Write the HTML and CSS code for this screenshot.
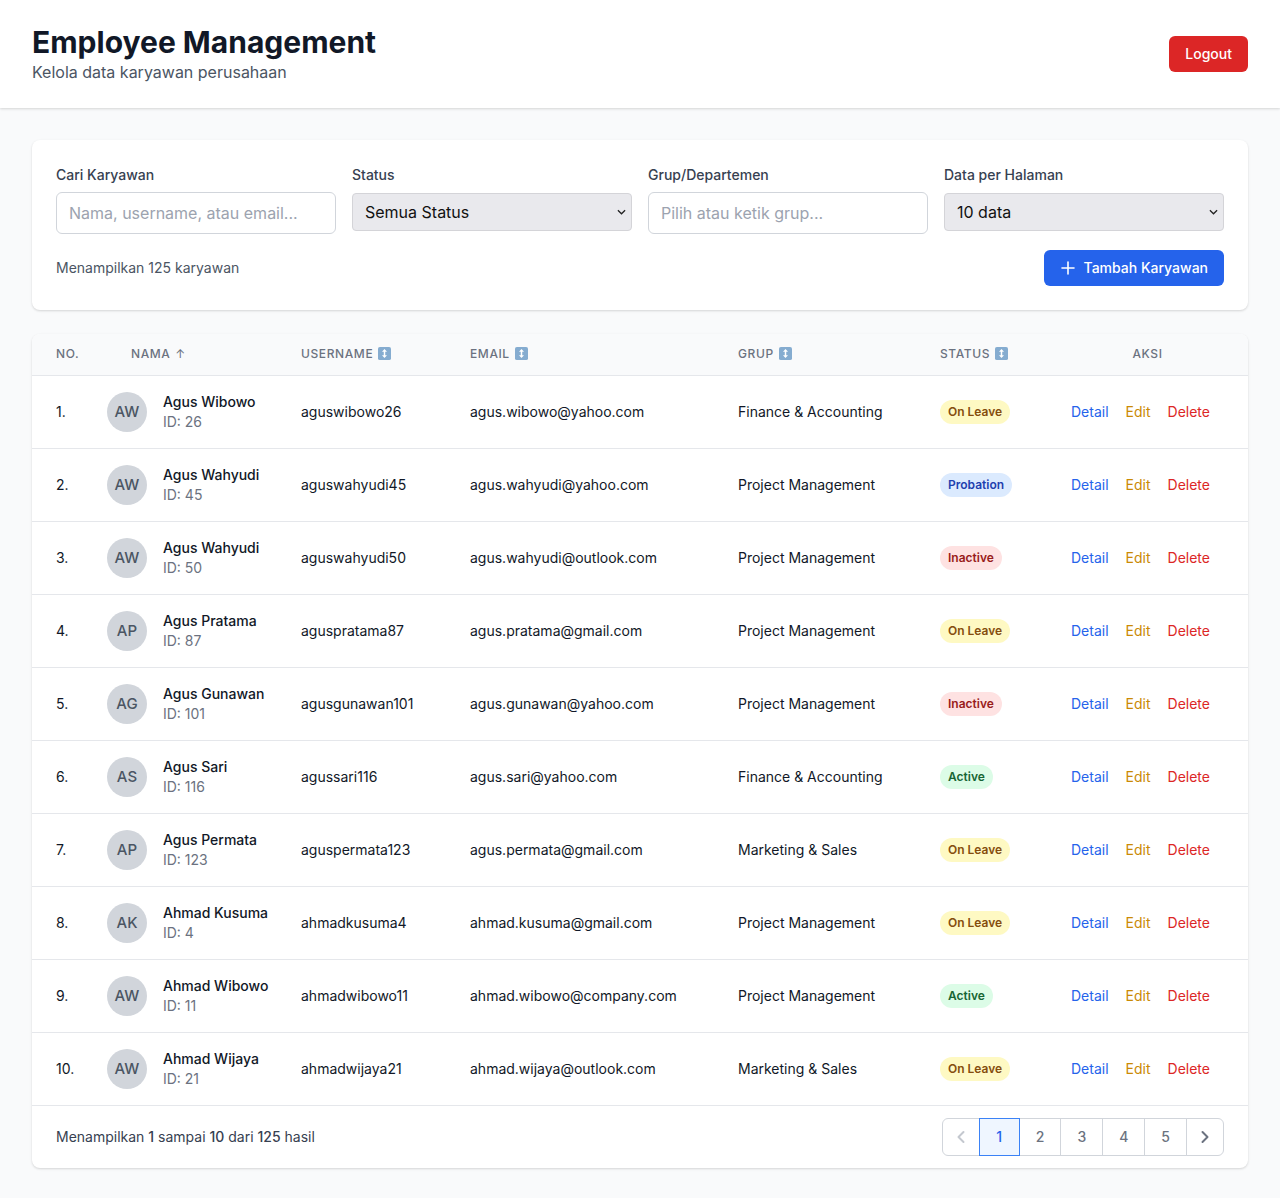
FILE: index.html
```html
<!DOCTYPE html>
<html lang="id">
<head>
<meta charset="utf-8">
<title>Employee Management</title>
<link rel="stylesheet" href="styles.css">
</head>
<body>
<header class="topbar">
  <div class="brand">
    <h1 class="title">Employee Management</h1>
    <p class="subtitle">Kelola data karyawan perusahaan</p>
  </div>
  <button class="btn btn-red">Logout</button>
</header>

<main class="main">
  <section class="card filters">
    <div class="filter-grid">
      <div class="field">
        <label class="label">Cari Karyawan</label>
        <input class="input" type="text" placeholder="Nama, username, atau email...">
      </div>
      <div class="field">
        <label class="label">Status</label>
        <div class="select-wrap">
          <select class="select"><option>Semua Status</option></select>
          <svg class="chev" viewBox="0 0 10 6"><path d="M1 1l4 4 4-4" fill="none" stroke="#222" stroke-width="1.4"/></svg>
        </div>
      </div>
      <div class="field">
        <label class="label">Grup/Departemen</label>
        <input class="input" type="text" placeholder="Pilih atau ketik grup...">
      </div>
      <div class="field">
        <label class="label">Data per Halaman</label>
        <div class="select-wrap">
          <select class="select"><option>10 data</option></select>
          <svg class="chev" viewBox="0 0 10 6"><path d="M1 1l4 4 4-4" fill="none" stroke="#222" stroke-width="1.4"/></svg>
        </div>
      </div>
    </div>
    <div class="filter-foot">
      <span class="muted">Menampilkan 125 karyawan</span>
      <button class="btn btn-blue">
        <svg class="plus" viewBox="0 0 16 16"><path d="M8 2v12M2 8h12" stroke="#fff" stroke-width="1.6" stroke-linecap="round"/></svg>
        Tambah Karyawan
      </button>
    </div>
  </section>

  <section class="card table-card">
    <table class="table">
      <colgroup>
        <col class="c-no"><col class="c-nama"><col class="c-user"><col class="c-email"><col class="c-grup"><col class="c-status"><col class="c-aksi">
      </colgroup>
      <thead>
        <tr>
          <th>No.</th>
          <th class="th-nama">Nama <span class="arrow">↑</span></th>
          <th>Username <svg class="sort" viewBox="0 0 14 14"><rect width="14" height="14" rx="2" fill="#85acd0"/><path d="M7 2.2L4.3 5h1.9v4H4.3L7 11.8 9.7 9H7.8V5h1.9z" fill="#fff"/></svg></th>
          <th>Email <svg class="sort" viewBox="0 0 14 14"><rect width="14" height="14" rx="2" fill="#85acd0"/><path d="M7 2.2L4.3 5h1.9v4H4.3L7 11.8 9.7 9H7.8V5h1.9z" fill="#fff"/></svg></th>
          <th>Grup <svg class="sort" viewBox="0 0 14 14"><rect width="14" height="14" rx="2" fill="#85acd0"/><path d="M7 2.2L4.3 5h1.9v4H4.3L7 11.8 9.7 9H7.8V5h1.9z" fill="#fff"/></svg></th>
          <th>Status <svg class="sort" viewBox="0 0 14 14"><rect width="14" height="14" rx="2" fill="#85acd0"/><path d="M7 2.2L4.3 5h1.9v4H4.3L7 11.8 9.7 9H7.8V5h1.9z" fill="#fff"/></svg></th>
          <th class="th-aksi">Aksi</th>
        </tr>
      </thead>
      <tbody>
        <tr>
          <td>1.</td>
          <td><div class="person"><span class="avatar">AW</span><div><div class="name">Agus Wibowo</div><div class="pid">ID: 26</div></div></div></td>
          <td>aguswibowo26</td><td>agus.wibowo@yahoo.com</td><td>Finance &amp; Accounting</td>
          <td><span class="badge b-leave">On Leave</span></td>
          <td><div class="actions"><a class="a-detail">Detail</a><a class="a-edit">Edit</a><a class="a-del">Delete</a></div></td>
        </tr>
        <tr>
          <td>2.</td>
          <td><div class="person"><span class="avatar">AW</span><div><div class="name">Agus Wahyudi</div><div class="pid">ID: 45</div></div></div></td>
          <td>aguswahyudi45</td><td>agus.wahyudi@yahoo.com</td><td>Project Management</td>
          <td><span class="badge b-prob">Probation</span></td>
          <td><div class="actions"><a class="a-detail">Detail</a><a class="a-edit">Edit</a><a class="a-del">Delete</a></div></td>
        </tr>
        <tr>
          <td>3.</td>
          <td><div class="person"><span class="avatar">AW</span><div><div class="name">Agus Wahyudi</div><div class="pid">ID: 50</div></div></div></td>
          <td>aguswahyudi50</td><td>agus.wahyudi@outlook.com</td><td>Project Management</td>
          <td><span class="badge b-inact">Inactive</span></td>
          <td><div class="actions"><a class="a-detail">Detail</a><a class="a-edit">Edit</a><a class="a-del">Delete</a></div></td>
        </tr>
        <tr>
          <td>4.</td>
          <td><div class="person"><span class="avatar">AP</span><div><div class="name">Agus Pratama</div><div class="pid">ID: 87</div></div></div></td>
          <td>aguspratama87</td><td>agus.pratama@gmail.com</td><td>Project Management</td>
          <td><span class="badge b-leave">On Leave</span></td>
          <td><div class="actions"><a class="a-detail">Detail</a><a class="a-edit">Edit</a><a class="a-del">Delete</a></div></td>
        </tr>
        <tr>
          <td>5.</td>
          <td><div class="person"><span class="avatar">AG</span><div><div class="name">Agus Gunawan</div><div class="pid">ID: 101</div></div></div></td>
          <td>agusgunawan101</td><td>agus.gunawan@yahoo.com</td><td>Project Management</td>
          <td><span class="badge b-inact">Inactive</span></td>
          <td><div class="actions"><a class="a-detail">Detail</a><a class="a-edit">Edit</a><a class="a-del">Delete</a></div></td>
        </tr>
        <tr>
          <td>6.</td>
          <td><div class="person"><span class="avatar">AS</span><div><div class="name">Agus Sari</div><div class="pid">ID: 116</div></div></div></td>
          <td>agussari116</td><td>agus.sari@yahoo.com</td><td>Finance &amp; Accounting</td>
          <td><span class="badge b-act">Active</span></td>
          <td><div class="actions"><a class="a-detail">Detail</a><a class="a-edit">Edit</a><a class="a-del">Delete</a></div></td>
        </tr>
        <tr>
          <td>7.</td>
          <td><div class="person"><span class="avatar">AP</span><div><div class="name">Agus Permata</div><div class="pid">ID: 123</div></div></div></td>
          <td>aguspermata123</td><td>agus.permata@gmail.com</td><td>Marketing &amp; Sales</td>
          <td><span class="badge b-leave">On Leave</span></td>
          <td><div class="actions"><a class="a-detail">Detail</a><a class="a-edit">Edit</a><a class="a-del">Delete</a></div></td>
        </tr>
        <tr>
          <td>8.</td>
          <td><div class="person"><span class="avatar">AK</span><div><div class="name">Ahmad Kusuma</div><div class="pid">ID: 4</div></div></div></td>
          <td>ahmadkusuma4</td><td>ahmad.kusuma@gmail.com</td><td>Project Management</td>
          <td><span class="badge b-leave">On Leave</span></td>
          <td><div class="actions"><a class="a-detail">Detail</a><a class="a-edit">Edit</a><a class="a-del">Delete</a></div></td>
        </tr>
        <tr>
          <td>9.</td>
          <td><div class="person"><span class="avatar">AW</span><div><div class="name">Ahmad Wibowo</div><div class="pid">ID: 11</div></div></div></td>
          <td>ahmadwibowo11</td><td>ahmad.wibowo@company.com</td><td>Project Management</td>
          <td><span class="badge b-act">Active</span></td>
          <td><div class="actions"><a class="a-detail">Detail</a><a class="a-edit">Edit</a><a class="a-del">Delete</a></div></td>
        </tr>
        <tr>
          <td>10.</td>
          <td><div class="person"><span class="avatar">AW</span><div><div class="name">Ahmad Wijaya</div><div class="pid">ID: 21</div></div></div></td>
          <td>ahmadwijaya21</td><td>ahmad.wijaya@outlook.com</td><td>Marketing &amp; Sales</td>
          <td><span class="badge b-leave">On Leave</span></td>
          <td><div class="actions"><a class="a-detail">Detail</a><a class="a-edit">Edit</a><a class="a-del">Delete</a></div></td>
        </tr>
      </tbody>
    </table>
    <div class="table-foot">
      <p class="summary">Menampilkan <b>1</b> sampai <b>10</b> dari <b>125</b> hasil</p>
      <nav class="pager">
        <button class="pg pg-arrow pg-disabled"><svg viewBox="0 0 20 20"><path d="M12.5 5l-5 5 5 5" fill="none" stroke="currentColor" stroke-width="2" stroke-linecap="round" stroke-linejoin="round"/></svg></button>
        <button class="pg pg-active">1</button>
        <button class="pg">2</button>
        <button class="pg">3</button>
        <button class="pg">4</button>
        <button class="pg">5</button>
        <button class="pg pg-arrow"><svg viewBox="0 0 20 20"><path d="M7.5 5l5 5-5 5" fill="none" stroke="currentColor" stroke-width="2" stroke-linecap="round" stroke-linejoin="round"/></svg></button>
      </nav>
    </div>
  </section>
</main>
</body>
</html>
```

FILE: styles.css
```css
* { box-sizing: border-box; }

body {
  margin: 0;
  background: #f9fafb;
  font-family: Inter, "Noto Sans", "Liberation Sans", sans-serif;
  color: #111827;
  font-size: 14px;
  line-height: 20px;
}

.topbar {
  background: #fff;
  box-shadow: 0 1px 3px rgba(0,0,0,0.1), 0 1px 2px rgba(0,0,0,0.06);
  padding: 24px 32px;
  display: flex;
  align-items: center;
  justify-content: space-between;
}

.title {
  margin: 0;
  font-size: 30px;
  line-height: 36px;
  font-weight: 700;
  color: #111827;
}

.subtitle {
  margin: 0;
  font-size: 16px;
  line-height: 24px;
  color: #4b5563;
}

.btn {
  border: 0;
  border-radius: 6px;
  font-family: inherit;
  font-size: 14px;
  line-height: 20px;
  font-weight: 500;
  color: #fff;
  padding: 8px 16px;
  display: inline-flex;
  align-items: center;
  gap: 8px;
}

.btn-red { background: #dc2626; }
.btn-blue { background: #2563eb; }

.plus { width: 16px; height: 16px; }

.main { padding: 32px 32px 31px; }

.card {
  background: #fff;
  border-radius: 8px;
  box-shadow: 0 1px 3px rgba(0,0,0,0.1), 0 1px 2px rgba(0,0,0,0.06);
}

.filters { padding: 25px 24px 24px; margin-bottom: 24px; }

.filter-grid {
  display: grid;
  grid-template-columns: repeat(4, 1fr);
  gap: 16px;
}

.field { display: flex; flex-direction: column; }

.label {
  font-size: 14px;
  line-height: 20px;
  font-weight: 500;
  color: #374151;
  margin-bottom: 7px;
}

.input {
  height: 42px;
  border: 1px solid #d1d5db;
  border-radius: 6px;
  padding: 0 12px;
  font-family: inherit;
  font-size: 16px;
  color: #111827;
  background: #fff;
}

.input::placeholder { color: #9ca3af; }

.select-wrap { position: relative; margin-top: 1px; }

.select {
  appearance: none;
  -webkit-appearance: none;
  width: 100%;
  height: 38px;
  border: 1px solid #d4d4d8;
  border-radius: 4px;
  background: #e9e9ed;
  padding: 0 12px;
  font-family: inherit;
  font-size: 16px;
  color: #111;
}

.chev {
  position: absolute;
  right: 6px;
  top: 16px;
  width: 9px;
  height: 6px;
}

.filter-foot {
  margin-top: 16px;
  display: flex;
  justify-content: space-between;
  align-items: center;
}

.muted { color: #4b5563; font-size: 14px; }

.table-card { overflow: hidden; }

.table {
  width: 100%;
  border-collapse: collapse;
  table-layout: fixed;
}

.c-no { width: 51px; }
.c-nama { width: 194px; }
.c-user { width: 169px; }
.c-email { width: 268px; }
.c-grup { width: 202px; }
.c-status { width: 131px; }
.c-aksi { width: 201px; }

.table thead tr { background: #f9fafb; border-bottom: 1px solid #e5e7eb; }

.table th {
  padding: 12px 24px;
  height: 41px;
  text-align: left;
  font-size: 12px;
  line-height: 16px;
  font-weight: 500;
  color: #6b7280;
  text-transform: uppercase;
  letter-spacing: 0.05em;
  white-space: nowrap;
}

.table th:first-child { padding-right: 0; }
.table th.th-nama { padding-left: 48px; }
.table th.th-aksi { text-align: center; }

.arrow { font-size: 12px; line-height: 16px; color: #6b7280; margin-left: 1px; font-weight: 400; }

.sort { display: inline-block; width: 13px; height: 13px; vertical-align: -2px; margin-left: 1px; }

.table td {
  padding: 16px 24px;
  font-size: 14px;
  line-height: 20px;
  color: #111827;
  border-bottom: 1px solid #e5e7eb;
  white-space: nowrap;
  vertical-align: middle;
}

.table td:first-child { padding-right: 0; }

.person { display: flex; align-items: center; gap: 16px; }

.avatar {
  width: 40px;
  height: 40px;
  border-radius: 50%;
  background: #d1d5db;
  color: #4b5563;
  font-size: 15px;
  font-weight: 500;
  display: flex;
  align-items: center;
  justify-content: center;
  flex-shrink: 0;
}

.name { font-weight: 500; color: #111827; }
.pid { color: #6b7280; }

.badge {
  display: inline-block;
  padding: 4px 8px;
  border-radius: 9999px;
  font-size: 12px;
  line-height: 16px;
  font-weight: 600;
}

.b-leave { background: #fef9c3; color: #854d0e; }
.b-prob { background: #dbeafe; color: #1e40af; }
.b-inact { background: #fee2e2; color: #991b1b; }
.b-act { background: #dcfce7; color: #166534; }

.actions { display: flex; gap: 17px; }
.a-detail { color: #2563eb; }
.a-edit { color: #ca8a04; }
.a-del { color: #dc2626; }

.table-foot {
  padding: 12px 24px;
  display: flex;
  justify-content: space-between;
  align-items: center;
}

.summary { margin: 0; color: #374151; font-size: 14px; }
.summary b { font-weight: 500; }

.pager { display: flex; }

.pg {
  position: relative;
  margin-left: -1px;
  border: 1px solid #d1d5db;
  background: #fff;
  color: #6b7280;
  font-family: inherit;
  font-size: 14px;
  line-height: 20px;
  font-weight: 500;
  padding: 8px 16px;
  min-width: 42px;
}

.pg:first-child { margin-left: 0; border-radius: 6px 0 0 6px; }
.pg:last-child { border-radius: 0 6px 6px 0; }

.pg-arrow { padding: 8px; min-width: 0; display: flex; align-items: center; color: #6b7280; }
.pg-arrow svg { width: 20px; height: 20px; }
.pg-disabled { color: #c4c8cf; }

.pg-active {
  z-index: 1;
  border-color: #3b82f6;
  background: #eff6ff;
  color: #2563eb;
  min-width: 41px;
}
```
